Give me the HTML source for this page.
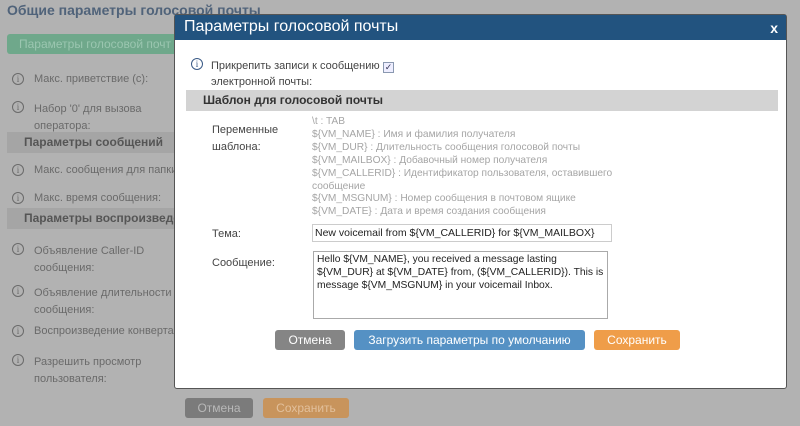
<!DOCTYPE html>
<html><head><meta charset="utf-8"><style>
*{box-sizing:border-box;margin:0;padding:0}
body{width:800px;height:426px;overflow:hidden;background:#b2b2b2;font-family:"Liberation Sans",sans-serif;font-size:11px;position:relative;color:#6a6a6a}
.a{position:absolute;white-space:nowrap}
.ic{position:absolute;width:12px;height:12px;border:1px solid #6a6a6a;border-radius:50%;font-size:9px;line-height:10px;text-align:center;font-family:"Liberation Serif",serif}
.bar{position:absolute;background:#a5a5a5;font-weight:bold;color:#555;font-size:12px;padding-left:17px;line-height:21px;white-space:nowrap;overflow:hidden}
.btn{position:absolute;border-radius:3px;color:#fff;text-align:center;font-size:12px;line-height:20px;white-space:nowrap}
#dlg{position:absolute;left:174px;top:14px;width:613px;height:375px;background:#fff;border:1px solid #555;border-radius:3px;color:#444}
#dlg .hd{height:25px;background:#22537f;color:#fff;font-size:16px;line-height:24px;padding-left:9px}
</style></head><body>
<div class="a" style="left:7px;top:2px;font-size:14px;font-weight:bold;color:#50637a">Общие параметры голосовой почты</div>
<div class="a" style="left:7px;top:34px;width:170px;height:20px;background:#6fa88b;border-radius:3px;color:#9bc6b0;font-size:12px;line-height:20px;padding-left:12px">Параметры голосовой почт</div>
<div class="ic" style="left:12px;top:73px">i</div><div class="a" style="left:34px;top:73px">Макс. приветствие (с):</div>
<div class="ic" style="left:12px;top:101px">i</div><div class="a" style="left:34px;top:101px;line-height:17px">Набор '0' для вызова<br>оператора:</div>
<div class="bar" style="left:7px;top:132px;width:170px">Параметры сообщений</div>
<div class="ic" style="left:12px;top:164px">i</div><div class="a" style="left:34px;top:164px">Макс. сообщения для папки:</div>
<div class="ic" style="left:12px;top:192px">i</div><div class="a" style="left:34px;top:192px">Макс. время сообщения:</div>
<div class="bar" style="left:7px;top:208px;width:170px">Параметры воспроизведения</div>
<div class="ic" style="left:12px;top:243px">i</div><div class="a" style="left:34px;top:243px;line-height:17px">Объявление Caller-ID<br>сообщения:</div>
<div class="ic" style="left:12px;top:285px">i</div><div class="a" style="left:34px;top:285px;line-height:17px">Объявление длительности<br>сообщения:</div>
<div class="ic" style="left:12px;top:325px">i</div><div class="a" style="left:34px;top:325px">Воспроизведение конверта:</div>
<div class="ic" style="left:12px;top:354px">i</div><div class="a" style="left:34px;top:354px;line-height:17px">Разрешить просмотр<br>пользователя:</div>
<div class="btn" style="left:185px;top:398px;width:68px;background:#7b7b7b;color:#b8b8b8">Отмена</div>
<div class="btn" style="left:263px;top:398px;width:86px;background:#c8945c;color:#e2c09c">Сохранить</div>

<div id="dlg">
<div class="hd">Параметры голосовой почты<span style="position:absolute;right:8px;top:1px;font-size:14px;font-weight:bold">x</span></div>
<div class="ic" style="left:16px;top:43px;border-color:#3a5a86;color:#3a5a86">i</div>
<div class="a" style="left:36px;top:43px;line-height:16px">Прикрепить записи к сообщению<br>электронной почты:</div>
<div class="a" style="left:208px;top:47px;width:11px;height:11px;border:1px solid #8a98b0;background:#eef;font-size:9px;line-height:9px;text-align:center;color:#335">✓</div>
<div class="a" style="left:11px;top:75px;width:592px;height:21px;background:#d3d3d3;font-weight:bold;font-size:12px;line-height:21px;padding-left:17px;color:#333">Шаблон для голосовой почты</div>
<div class="a" style="left:37px;top:107px;line-height:17px">Переменные<br>шаблона:</div>
<div class="a" style="left:137px;top:101px;line-height:12.9px;color:#a5a5a5;font-size:10.2px">\t : TAB<br>${VM_NAME} : Имя и фамилия получателя<br>${VM_DUR} : Длительность сообщения голосовой почты<br>${VM_MAILBOX} : Добавочный номер получателя<br>${VM_CALLERID} : Идентификатор пользователя, оставившего<br>сообщение<br>${VM_MSGNUM} : Номер сообщения в почтовом ящике<br>${VM_DATE} : Дата и время создания сообщения</div>
<div class="a" style="left:37px;top:213px">Тема:</div>
<div class="a" style="left:137px;top:209px;width:300px;height:18px;border:1px solid #ccc;font-size:10.5px;line-height:16px;padding-left:2px;color:#222">New voicemail from ${VM_CALLERID} for ${VM_MAILBOX}</div>
<div class="a" style="left:37px;top:242px">Сообщение:</div>
<div class="a" style="left:138px;top:236px;width:295px;height:68px;border:1px solid #aaa;font-size:10.3px;line-height:13px;padding:1px 3px;color:#222;overflow:hidden">Hello ${VM_NAME}, you received a message lasting<br>${VM_DUR} at ${VM_DATE} from, (${VM_CALLERID}). This is<br>message ${VM_MSGNUM} in your voicemail Inbox.</div>
<div class="btn" style="left:100px;top:315px;width:70px;background:#858585">Отмена</div>
<div class="btn" style="left:179px;top:315px;width:231px;background:#5591c4">Загрузить параметры по умолчанию</div>
<div class="btn" style="left:419px;top:315px;width:86px;background:#ef9d49">Сохранить</div>
</div>
</body></html>
